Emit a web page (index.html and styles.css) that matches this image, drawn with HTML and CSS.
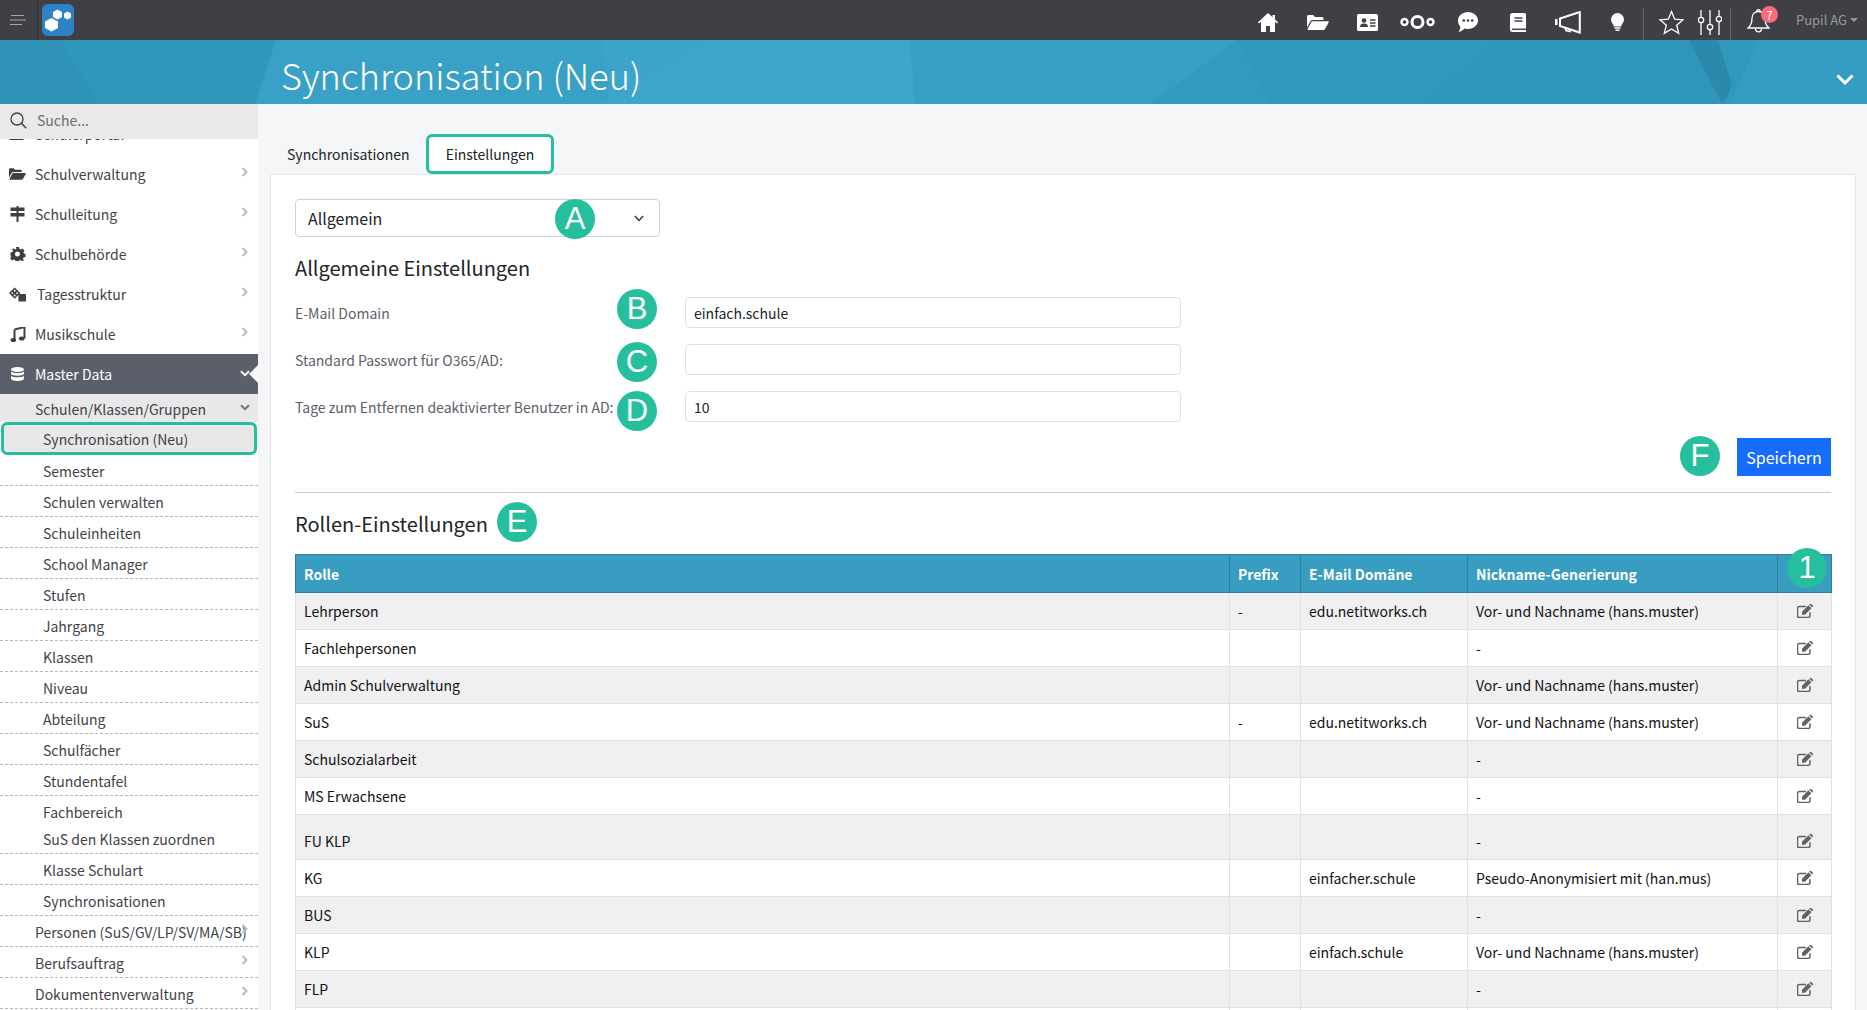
FILE: index.html
```html
<!DOCTYPE html>
<html lang="de">
<head>
  <meta charset="UTF-8">
  <meta name="viewport" content="width=device-width, initial-scale=1.0">
  <title>Synchronisation (Neu)</title>
  <link rel="stylesheet" href="styles.css">
</head>
<body>
  <svg class="sprite" aria-hidden="true">
    <symbol id="i-edit" viewBox="0 0 16 14">
      <path d="M13 8.2v3.3A2 2 0 0 1 11 13.5H2.5A2 2 0 0 1 .5 11.5V4.5A2 2 0 0 1 2.5 2.5H9" fill="none" stroke="currentColor" stroke-width="1.5"/>
      <path d="M5 7.7 11.4 1.3l3 3L8 10.7H5z M12.2.6 13 0a.9.9 0 0 1 1.2 0l1.6 1.6a.9.9 0 0 1 0 1.2l-.7.8z" fill="currentColor"/>
    </symbol>
    <symbol id="i-chev-right" viewBox="0 0 7 10">
      <path d="M1.5 1 5.5 5 1.5 9" fill="none" stroke="currentColor" stroke-width="2"/>
    </symbol>
    <symbol id="i-chev-down" viewBox="0 0 10 7">
      <path d="M1 1.2 5 5.2 9 1.2" fill="none" stroke="currentColor" stroke-width="2"/>
    </symbol>
  </svg>

  <!-- Top bar -->
  <header class="topbar">
    <div class="topbar-left">
      <button class="menu-btn" aria-label="Menü">
        <svg width="16" height="10" viewBox="0 0 16 10"><path d="M1 .5h13M0 5h16M0 9.5h12" stroke="#a5a6aa" stroke-width="1" fill="none"/></svg>
      </button>
      <svg class="logo" width="32" height="32" viewBox="0 0 32 32">
        <rect width="32" height="32" rx="6" fill="#2d83c5"/>
        <path d="M9.5 14l6.5 3.5v6.5L9.5 27.500 3 24v-6.500z" fill="#fff"/>
        <path d="M15.500 5.500 20 8v5l-4.500 2.500L11 13V8z" fill="#fff"/>
        <path d="M25.500 7.500 29 9.500v4L25.500 15.500 22 13.500v-4z" fill="#fff"/>
      </svg>
    </div>
    <nav class="topbar-icons">
      <a class="top-slot"><svg width="20" height="19" viewBox="0 0 20 19"><path d="M10 0 0 9.300 1 10.500 3 8.800V19h5v-6h4v6h5V8.800l2 1.700 1-1.200-3-2.800V2h-2.500v2.200z" fill="#fff"/></svg></a>
      <a class="top-slot"><svg width="22" height="15" viewBox="0 0 22 15"><path d="M0 12.500V1.500Q0 0 1.500 0h4.500l2 2h7q1.500 0 1.500 1.500V5H5.500Q4.200 5 3.500 6z" fill="#fff"/><path d="M5.500 6.200H21q1.200 0 .6 1.200l-3.400 6.400q-.6 1.200-1.900 1.200H1.300q-1.200 0-.6-1.100l3.300-6.500q.6-1.200 1.500-1.200z" fill="#fff"/></svg></a>
      <a class="top-slot"><svg width="21" height="17" viewBox="0 0 21 17"><rect width="21" height="17" rx="1.500" fill="#fff"/><circle cx="7" cy="6.500" r="2.300" fill="#3f4046"/><path d="M3 13c0-2.500 1.500-3.500 4-3.500s4 1 4 3.500z" fill="#3f4046"/><path d="M13 6h5.500M13 9h5.500M13 12h5.500" stroke="#3f4046" stroke-width="1.300"/></svg></a>
      <a class="top-slot"><svg width="35" height="14" viewBox="0 0 35 14"><g fill="none" stroke="#fff"><circle cx="4.500" cy="7" r="3" stroke-width="2.400"/><circle cx="17.500" cy="7" r="5.500" stroke-width="3"/><circle cx="30.500" cy="7" r="3" stroke-width="2.400"/></g></svg></a>
      <a class="top-slot"><svg width="20" height="20" viewBox="0 0 20 20"><path d="M10 0c5.500 0 10 3.700 10 8.500S15.500 17 10 17c-1.300 0-2.500-.2-3.500-.5C5 18.300 3 19.500.5 20c1-1.300 1.700-3 1.900-5.200C.9 13.300 0 11 0 8.500 0 3.700 4.500 0 10 0z" fill="#fff"/><circle cx="5.800" cy="8.500" r="1.300" fill="#3f4046"/><circle cx="10" cy="8.500" r="1.300" fill="#3f4046"/><circle cx="14.200" cy="8.500" r="1.300" fill="#3f4046"/></svg></a>
      <a class="top-slot"><svg width="16" height="19" viewBox="0 0 16 19"><path d="M2.500 0H14.500q1.500 0 1.500 1.500V15.500H2.500Q1.500 15.500 1.500 17t1 1.500H16V19H2.500Q0 19 0 16.500V2.500Q0 0 2.500 0z" fill="#fff"/><path d="M4.500 5h8M4.500 8h8" stroke="#3f4046" stroke-width="1.500"/><path d="M1 16h15v3H2z" fill="#fff"/><path d="M2 16.600h14" stroke="#3f4046" stroke-width="1"/></svg></a>
      <a class="top-slot"><svg width="26" height="23" viewBox="0 0 26 23"><path d="M0 8h2.500v6H0z" fill="#fff"/><path d="M5 7.500 24.800 1v20.500L5 15z" fill="none" stroke="#fff" stroke-width="2"/><path d="M10 16.500 11 19.500 15 20.500 15 18" fill="none" stroke="#fff" stroke-width="1.600"/></svg></a>
      <a class="top-slot"><svg width="13" height="18" viewBox="0 0 13 18"><path d="M6.500 0A6.500 6.500 0 0 1 13 6.500c0 2.800-2.300 4.200-2.800 7H2.800C2.300 10.700 0 9.300 0 6.500A6.500 6.500 0 0 1 6.500 0z" fill="#fff"/><path d="M3.500 15h6M4.500 17.200h4" stroke="#fff" stroke-width="1.500"/></svg></a>
      <span class="top-divider"></span>
      <a class="top-slot top-slot-star"><svg width="25" height="25" viewBox="0 0 25 25"><path d="M12.500 1.500 15.700 9.200 24 9.800 17.700 15.200 19.700 23.300 12.500 19 5.300 23.300 7.300 15.200 1 9.800 9.300 9.200z" fill="none" stroke="#fff" stroke-width="1.300"/></svg></a>
      <a class="top-slot top-slot-sliders"><svg width="24" height="25" viewBox="0 0 24 25"><g fill="none" stroke="#fff" stroke-width="1.300"><path d="M3 0v7M3 13v12M12 0v14M12 20v5M21 0v6M21 12v13"/><circle cx="3" cy="10" r="2.700"/><circle cx="12" cy="17" r="2.700"/><circle cx="21" cy="9" r="2.700"/></g></svg></a>
      <span class="top-divider"></span>
      <a class="top-bell">
        <svg width="23" height="26" viewBox="0 0 23 26"><path d="M11.500 3.500c-4 0-6.500 3-6.500 7 0 5-1 7-4 9.500h21c-3-2.500-4-4.500-4-9.500 0-4-2.500-7-6.500-7zM9.700 3.500c0-2.400 3.600-2.400 3.600 0M8.500 20.500c0 4.500 6 4.500 6 0" fill="none" stroke="#fff" stroke-width="1.300"/></svg>
        <span class="bell-count">7</span>
      </a>
      <a class="top-user">Pupil AG<span class="user-caret"></span></a>
    </nav>
  </header>

  <!-- Page banner -->
  <section class="banner">
    <svg class="banner-art" viewBox="0 0 1867 64" preserveAspectRatio="none" aria-hidden="true">
      <rect width="1867" height="64" fill="#3198bc"/>
      <polygon points="0,0 60,0 100,64 0,64" fill="#2f93b8"/>
      <polygon points="60,0 276,0 255,64 100,64" fill="#3096ba"/>
      <polygon points="276,0 602,0 610,64 255,64" fill="#3aa1c6"/>
      <polygon points="602,0 910,0 915,64 610,64" fill="#3da5ca"/>
      <polygon points="720,0 910,0 915,64 600,64" fill="#3ea6cb"/>
      <polygon points="910,0 1238,0 1150,64 915,64" fill="#389fc4"/>
      <polygon points="1238,0 1270,64 1150,64" fill="#3399be"/>
      <polygon points="1500,0 1690,0 1720,64 1420,64" fill="#2f96ba"/>
      <polygon points="1689,0 1718,0 1738,64 1722,64" fill="#2a89ad"/>
      <polygon points="1718,0 1758,0 1722,64 1738,64" fill="#3198bc"/>
      <polygon points="1758,0 1867,0 1867,64 1730,64" fill="#359dc1"/>
    </svg>
    <h1 class="banner-title">Synchronisation (Neu)</h1>
    <svg class="banner-chevron" width="18" height="11" viewBox="0 0 18 11"><path d="M1.500 1.500 9 9l7.500-7.500" fill="none" stroke="#fff" stroke-width="3"/></svg>
  </section>

  <div class="layout">
    <!-- Sidebar -->
    <aside class="sidebar">
      <div class="search">
        <svg width="17" height="17" viewBox="0 0 17 17"><circle cx="7" cy="7" r="6" fill="none" stroke="#3f4046" stroke-width="1.300"/><path d="M11.300 11.300 16.300 16.300" stroke="#3f4046" stroke-width="1.500"/></svg>
        <span class="search-text">Suche...</span>
      </div>
      <div class="side-scroll">
        <ul class="side-list">
          <li class="side-item">
            <svg class="side-icon" width="16" height="12" viewBox="0 0 16 12"><rect width="14" height="12" fill="#3f4046"/></svg>
            <span>Schülerportal</span>
            <svg class="side-chev"><use href="#i-chev-right"/></svg>
          </li>
          <li class="side-item">
            <svg class="side-icon" width="16" height="12" viewBox="0 0 22 15"><path d="M0 12.500V1.500Q0 0 1.500 0h4.500l2 2h7q1.500 0 1.500 1.500V5H5.500Q4.200 5 3.500 6z" fill="#3f4046"/><path d="M5.500 6.200H21q1.200 0 .6 1.200l-3.400 6.400q-.6 1.200-1.900 1.200H1.300q-1.200 0-.6-1.100l3.300-6.500q.6-1.200 1.500-1.200z" fill="#3f4046"/></svg>
            <span>Schulverwaltung</span>
            <svg class="side-chev"><use href="#i-chev-right"/></svg>
          </li>
          <li class="side-item">
            <svg class="side-icon" width="14" height="16" viewBox="0 0 14 16"><path d="M0 1.500h14v3.500H0zM0 7h14v3.500H0zM6 0h2v1.500H6zM6 5h2v2H6zM6 10.500h2V16H6z" fill="#3f4046"/></svg>
            <span>Schulleitung</span>
            <svg class="side-chev"><use href="#i-chev-right"/></svg>
          </li>
          <li class="side-item">
            <svg class="side-icon" width="14" height="14" viewBox="0 0 14 14"><path fill-rule="evenodd" d="M5.500 0h3l.4 2 1.300.6L12 1.500l2 2-1.100 1.800.6 1.300 1.500.4v3l-2 .4-.6 1.300 1.100 1.800-2 .5-1.800-1-1.300.6-.3 1.400h-3l-.4-2-1.300-.5-1.800 1-2-2 1.100-1.800-.6-1.300L0 8.500v-3l2-.4.600-1.300L1.500 2l2-.5 1.800 1 .6-.4zM7 4.500a2.500 2.500 0 1 0 0 5 2.500 2.500 0 0 0 0-5z" fill="#3f4046"/></svg>
            <span>Schulbehörde</span>
            <svg class="side-chev"><use href="#i-chev-right"/></svg>
          </li>
          <li class="side-item side-item-tages">
            <svg class="side-icon" width="18" height="15" viewBox="0 0 18 15"><path d="M6 0 12 6 6 12 0 6z" fill="#3f4046"/><rect x="10" y="7" width="8" height="8" rx="1" fill="#3f4046"/><circle cx="6" cy="3.500" r="1" fill="#fff"/><circle cx="3.500" cy="6" r="1" fill="#fff"/><circle cx="8.500" cy="6" r="1" fill="#fff"/><circle cx="6" cy="8.500" r="1" fill="#fff"/></svg>
            <span>Tagesstruktur</span>
            <svg class="side-chev"><use href="#i-chev-right"/></svg>
          </li>
          <li class="side-item">
            <svg class="side-icon" width="14" height="15" viewBox="0 0 14 15"><path d="M4 2.500 14 0v11.500" fill="none" stroke="#3f4046" stroke-width="2"/><path d="M4 2.500V13" fill="none" stroke="#3f4046" stroke-width="2"/><ellipse cx="2.800" cy="13" rx="2.800" ry="2" fill="#3f4046"/><ellipse cx="11.200" cy="11.500" rx="2.800" ry="2" fill="#3f4046"/></svg>
            <span>Musikschule</span>
            <svg class="side-chev"><use href="#i-chev-right"/></svg>
          </li>
          <li class="side-item side-item-active">
            <svg class="side-icon" width="14" height="14" viewBox="0 0 14 14"><ellipse cx="7" cy="2.500" rx="6.500" ry="2.500" fill="#fff"/><path d="M.5 4.500C2 6.700 12 6.700 13.500 4.500V7C12 9.200 2 9.200 .5 7zM.5 8.700C2 10.900 12 10.900 13.500 8.700v2.800C13 13.300 10 14 7 14s-6-.7-6.500-2.500z" fill="#fff"/></svg>
            <span>Master Data</span>
            <svg class="side-chev-down"><use href="#i-chev-down"/></svg>
          </li>
        </ul>
        <ul class="sub-list">
          <li class="sub-head">
            <span>Schulen/Klassen/Gruppen</span>
            <svg class="side-chev-down side-chev-grey"><use href="#i-chev-down"/></svg>
          </li>
          <li class="sub-link sub-link-current">Synchronisation (Neu)</li>
          <li class="sub-link">Semester</li>
          <li class="sub-link">Schulen verwalten</li>
          <li class="sub-link">Schuleinheiten</li>
          <li class="sub-link">School Manager</li>
          <li class="sub-link">Stufen</li>
          <li class="sub-link">Jahrgang</li>
          <li class="sub-link">Klassen</li>
          <li class="sub-link">Niveau</li>
          <li class="sub-link">Abteilung</li>
          <li class="sub-link">Schulfächer</li>
          <li class="sub-link">Stundentafel</li>
          <li class="sub-link sub-link-short">Fachbereich</li>
          <li class="sub-link">SuS den Klassen zuordnen</li>
          <li class="sub-link">Klasse Schulart</li>
          <li class="sub-link">Synchronisationen</li>
          <li class="sub-link sub-link-top">
            <span>Personen (SuS/GV/LP/SV/MA/SB)</span>
            <svg class="side-chev"><use href="#i-chev-right"/></svg>
          </li>
          <li class="sub-link sub-link-top">
            <span>Berufsauftrag</span>
            <svg class="side-chev"><use href="#i-chev-right"/></svg>
          </li>
          <li class="sub-link sub-link-top">
            <span>Dokumentenverwaltung</span>
            <svg class="side-chev"><use href="#i-chev-right"/></svg>
          </li>
        </ul>
      </div>
    </aside>

    <!-- Main content -->
    <main class="content">
      <div class="tabs">
        <button class="tab">Synchronisationen</button>
        <button class="tab tab-active">Einstellungen</button>
      </div>

      <section class="card">
        <div class="select-box">
          <span>Allgemein</span>
          <svg width="10" height="7" viewBox="0 0 10 7"><path d="M.8 1 5 5.500 9.200 1" fill="none" stroke="#333" stroke-width="1.400"/></svg>
        </div>

        <h2 class="card-title">Allgemeine Einstellungen</h2>

        <form class="settings-form">
          <div class="form-row">
            <label for="mail-domain">E-Mail Domain</label>
            <input type="text" id="mail-domain" value="einfach.schule">
          </div>
          <div class="form-row">
            <label for="std-pass">Standard Passwort für O365/AD:</label>
            <input type="text" id="std-pass">
          </div>
          <div class="form-row">
            <label for="ad-days">Tage zum Entfernen deaktivierter Benutzer in AD:</label>
            <input type="text" id="ad-days" value="10">
          </div>
          <div class="form-actions">
            <button type="button" class="btn-save">Speichern</button>
          </div>
        </form>

        <hr class="rule">

        <h2 class="card-title card-title-roles">Rollen-Einstellungen</h2>

        <table class="roles">
          <colgroup>
            <col class="col-role"><col class="col-prefix"><col class="col-mail"><col class="col-nick"><col class="col-edit">
          </colgroup>
          <thead>
            <tr><th>Rolle</th><th>Prefix</th><th>E-Mail Domäne</th><th>Nickname-Generierung</th><th></th></tr>
          </thead>
          <tbody>
            <tr><td>Lehrperson</td><td>-</td><td>edu.netitworks.ch</td><td>Vor- und Nachname (hans.muster)</td><td class="cell-edit"><svg><use href="#i-edit"/></svg></td></tr>
            <tr><td>Fachlehpersonen</td><td></td><td></td><td>-</td><td class="cell-edit"><svg><use href="#i-edit"/></svg></td></tr>
            <tr><td>Admin Schulverwaltung</td><td></td><td></td><td>Vor- und Nachname (hans.muster)</td><td class="cell-edit"><svg><use href="#i-edit"/></svg></td></tr>
            <tr><td>SuS</td><td>-</td><td>edu.netitworks.ch</td><td>Vor- und Nachname (hans.muster)</td><td class="cell-edit"><svg><use href="#i-edit"/></svg></td></tr>
            <tr><td>Schulsozialarbeit</td><td></td><td></td><td>-</td><td class="cell-edit"><svg><use href="#i-edit"/></svg></td></tr>
            <tr><td>MS Erwachsene</td><td></td><td></td><td>-</td><td class="cell-edit"><svg><use href="#i-edit"/></svg></td></tr>
            <tr class="row-tall"><td>FU KLP</td><td></td><td></td><td>-</td><td class="cell-edit"><svg><use href="#i-edit"/></svg></td></tr>
            <tr><td>KG</td><td></td><td>einfacher.schule</td><td>Pseudo-Anonymisiert mit (han.mus)</td><td class="cell-edit"><svg><use href="#i-edit"/></svg></td></tr>
            <tr><td>BUS</td><td></td><td></td><td>-</td><td class="cell-edit"><svg><use href="#i-edit"/></svg></td></tr>
            <tr><td>KLP</td><td></td><td>einfach.schule</td><td>Vor- und Nachname (hans.muster)</td><td class="cell-edit"><svg><use href="#i-edit"/></svg></td></tr>
            <tr><td>FLP</td><td></td><td></td><td>-</td><td class="cell-edit"><svg><use href="#i-edit"/></svg></td></tr>
            <tr><td>&nbsp;</td><td></td><td></td><td></td><td></td></tr>
          </tbody>
        </table>

        <!-- Annotation markers -->
        <span class="marker marker-a">A</span>
        <span class="marker marker-b">B</span>
        <span class="marker marker-c">C</span>
        <span class="marker marker-d">D</span>
        <span class="marker marker-e">E</span>
        <span class="marker marker-f">F</span>
        <span class="marker marker-1">1</span>
      </section>
    </main>
  </div>
</body>
</html>
```

FILE: styles.css
```css
/* General Styles */
* {
  box-sizing: border-box;
}

html, body {
  height: 100%;
}

body {
  margin: 0;
  height: 1010px;
  overflow: hidden;
  font-family: "Noto Sans CJK JP", "Noto Sans", Arial, sans-serif;
  font-size: 14px;
  line-height: 20px;
  color: #212529;
  background-color: #f5f6f8;
}

ul {
  margin: 0;
  padding: 0;
  list-style: none;
}

.sprite {
  display: none;
}

/* Top bar */
.topbar {
  display: flex;
  justify-content: space-between;
  height: 40px;
  background-color: #3f4046;
}

.topbar-left {
  display: flex;
  align-items: center;
}

.menu-btn {
  display: flex;
  align-items: center;
  width: 38px;
  height: 40px;
  padding: 0 0 0 10px;
  background: none;
  border: none;
  border-right: 1px solid #2f3035;
}

.logo {
  margin-left: 4px;
}

.topbar-icons {
  display: flex;
  align-items: center;
  height: 40px;
  padding-right: 9px;
}

.top-slot {
  display: flex;
  justify-content: center;
  align-items: center;
  width: 50px;
  height: 40px;
  padding-top: 4px;
}

.top-slot-star {
  width: 38px;
  margin-left: 9px;
  padding-top: 5px;
}

.top-slot-sliders {
  width: 39px;
  padding-top: 5px;
}

.top-divider {
  align-self: flex-end;
  width: 1px;
  height: 32px;
  background-color: #64656a;
}

.top-divider:first-of-type {
  margin-left: 0;
}

.top-bell {
  position: relative;
  display: flex;
  align-items: flex-start;
  width: 65px;
  height: 40px;
  padding: 8px 0 0 16px;
}

.bell-count {
  position: absolute;
  top: 6px;
  left: 30px;
  width: 17px;
  height: 17px;
  border-radius: 50%;
  background-color: #ff6b7a;
  color: #fff;
  font-size: 12px;
  line-height: 17px;
  text-align: center;
}

.top-user {
  display: flex;
  align-items: center;
  color: #97989c;
  font-size: 13px;
}

.user-caret {
  width: 0;
  height: 0;
  margin-left: 3px;
  border-left: 4px solid transparent;
  border-right: 4px solid transparent;
  border-top: 4px solid #97989c;
}

/* Banner */
.banner {
  position: relative;
  height: 64px;
  padding: 3px 0 0 281px;
  display: flex;
  align-items: center;
  overflow: hidden;
}

.banner-art {
  position: absolute;
  top: 0;
  left: 0;
  width: 100%;
  height: 100%;
}

.banner-title {
  position: relative;
  margin: 0;
  font-size: 36px;
  font-weight: 300;
  line-height: 44px;
  color: #fff;
}

.banner-chevron {
  position: absolute;
  top: 34px;
  left: 1836px;
}

/* Layout */
.layout {
  display: flex;
  height: 906px;
}

/* Sidebar */
.sidebar {
  flex: 0 0 258px;
  background-color: #fff;
  overflow: hidden;
}

.search {
  display: flex;
  align-items: center;
  gap: 10px;
  height: 35px;
  padding: 0 0 3px 10px;
  background-color: #e9e9ea;
}

.search-text {
  color: #6b6e74;
}

.side-scroll {
  height: 871px;
  overflow: hidden;
}

.side-list {
  margin-top: -25px;
}

.side-item {
  position: relative;
  display: flex;
  align-items: center;
  height: 40px;
  padding-left: 9px;
  color: #3f4349;
}

.side-icon {
  flex: 0 0 17px;
  margin-right: 9px;
}

.side-item-tages .side-icon {
  margin-right: 11px;
}

.side-chev {
  position: absolute;
  top: 50%;
  left: 241px;
  width: 7px;
  height: 10px;
  margin-top: -7px;
  color: #b9bbbe;
}

.side-chev-down {
  position: absolute;
  top: 50%;
  left: 240px;
  width: 10px;
  height: 7px;
  margin-top: -4px;
  color: #fff;
}

.side-chev-grey {
  color: #70747b;
}

.side-item-active {
  background-color: #5a5f69;
  color: #fff;
}

.side-item-active::after {
  content: "";
  position: absolute;
  top: 50%;
  right: 0;
  margin-top: -9px;
  border-top: 9px solid transparent;
  border-bottom: 9px solid transparent;
  border-right: 9px solid #f5f6f8;
}

.sub-head {
  position: relative;
  display: flex;
  align-items: center;
  height: 28px;
  padding: 2px 0 0 35px;
  background-color: #e8e8e8;
  color: #3f4349;
}

.sub-link {
  position: relative;
  height: 31px;
  padding: 6px 0 4px 43px;
  border-bottom: 1px dashed #b5b7ba;
  color: #3f4349;
}

.sub-link-current {
  height: 33px;
  margin: 0 1px;
  padding: 4px 0 0 39px;
  background-color: #e8e8e8;
  border: 3px solid #26bf9d;
  border-radius: 6px;
}

.sub-link-short {
  height: 27px;
  padding-bottom: 1px;
  border-bottom: none;
}

.sub-link-top {
  padding-left: 35px;
}

/* Main content */
.content {
  flex: 1;
  min-width: 0;
  padding: 0 11px 0 12px;
}

.tabs {
  display: flex;
  height: 70px;
  padding: 30px 0 0 1px;
}

.tab {
  height: 40px;
  padding: 0 16px;
  background: none;
  border: none;
  font: inherit;
  color: #212529;
}

.tab-active {
  padding: 0 17px;
  background-color: #fff;
  border: 3px solid #26bf9d;
  border-radius: 6px;
}

.card {
  position: relative;
  height: 900px;
  padding: 24px;
  background-color: #fff;
  border: 1px solid #e4e6ea;
}

.select-box {
  display: flex;
  justify-content: space-between;
  align-items: center;
  width: 365px;
  height: 38px;
  padding: 0 15px 0 12px;
  border: 1px solid #ced1d7;
  border-radius: 4px;
  font-size: 16px;
}

.card-title {
  margin: 16px 0 14px;
  font-size: 20px;
  font-weight: 400;
  line-height: 30px;
}

/* Form Styles */
.settings-form {
  display: flex;
  flex-direction: column;
  gap: 16px;
}

.form-row {
  display: flex;
  align-items: center;
}

.form-row label {
  flex: 0 0 390px;
  color: #5b6069;
}

.form-row input {
  width: 496px;
  height: 31px;
  padding: 0 8px;
  border: 1px solid #dde0e6;
  border-radius: 4px;
  font: inherit;
  color: #212529;
}

.form-actions {
  display: flex;
  justify-content: flex-end;
}

.btn-save {
  width: 94px;
  height: 38px;
  background-color: #156cff;
  border: none;
  color: #fff;
  font: inherit;
  font-size: 16px;
}

.rule {
  margin: 16px 0;
  border: none;
  border-top: 1px solid #cccccc;
}

.card-title-roles {
  margin: 0 0 15px;
}

/* Table */
.roles {
  width: 1536px;
  table-layout: fixed;
  border-collapse: collapse;
}

.col-role { width: 934px; }
.col-prefix { width: 71px; }
.col-mail { width: 167px; }
.col-nick { width: 310px; }
.col-edit { width: 54px; }

.roles th {
  height: 38px;
  padding: 0 8px;
  background-color: #389dc1;
  border: 1px solid #2e7f9e;
  border-width: 1px 1px 1px 1px;
  color: #fff;
  font-weight: 700;
  text-align: left;
}

.roles td {
  height: 37px;
  padding: 8px;
  border: 1px solid #dfe1e6;
  color: #111;
}

.roles tbody tr:nth-child(odd) td {
  background-color: #f0f0f1;
}

.roles .row-tall td {
  height: 45px;
  padding-top: 16px;
}

.cell-edit {
  text-align: center;
  color: #5f6268;
}

.roles .cell-edit svg {
  display: block;
  width: 16px;
  height: 14px;
  margin: 0 auto;
  color: #5f6268;
}

/* Annotation markers */
.marker {
  position: absolute;
  width: 40px;
  height: 40px;
  border-radius: 50%;
  background-color: #26bf9d;
  color: #fff;
  font-family: "Liberation Sans", Arial, sans-serif;
  font-size: 31px;
  line-height: 40px;
  text-align: center;
}

.marker-a { left: 284px; top: 24px; }
.marker-b { left: 346px; top: 114px; }
.marker-c { left: 346px; top: 167px; }
.marker-d { left: 346px; top: 216px; }
.marker-e { left: 226px; top: 327px; }
.marker-f { left: 1409px; top: 261px; }
.marker-1 { left: 1516px; top: 373px; }
```
